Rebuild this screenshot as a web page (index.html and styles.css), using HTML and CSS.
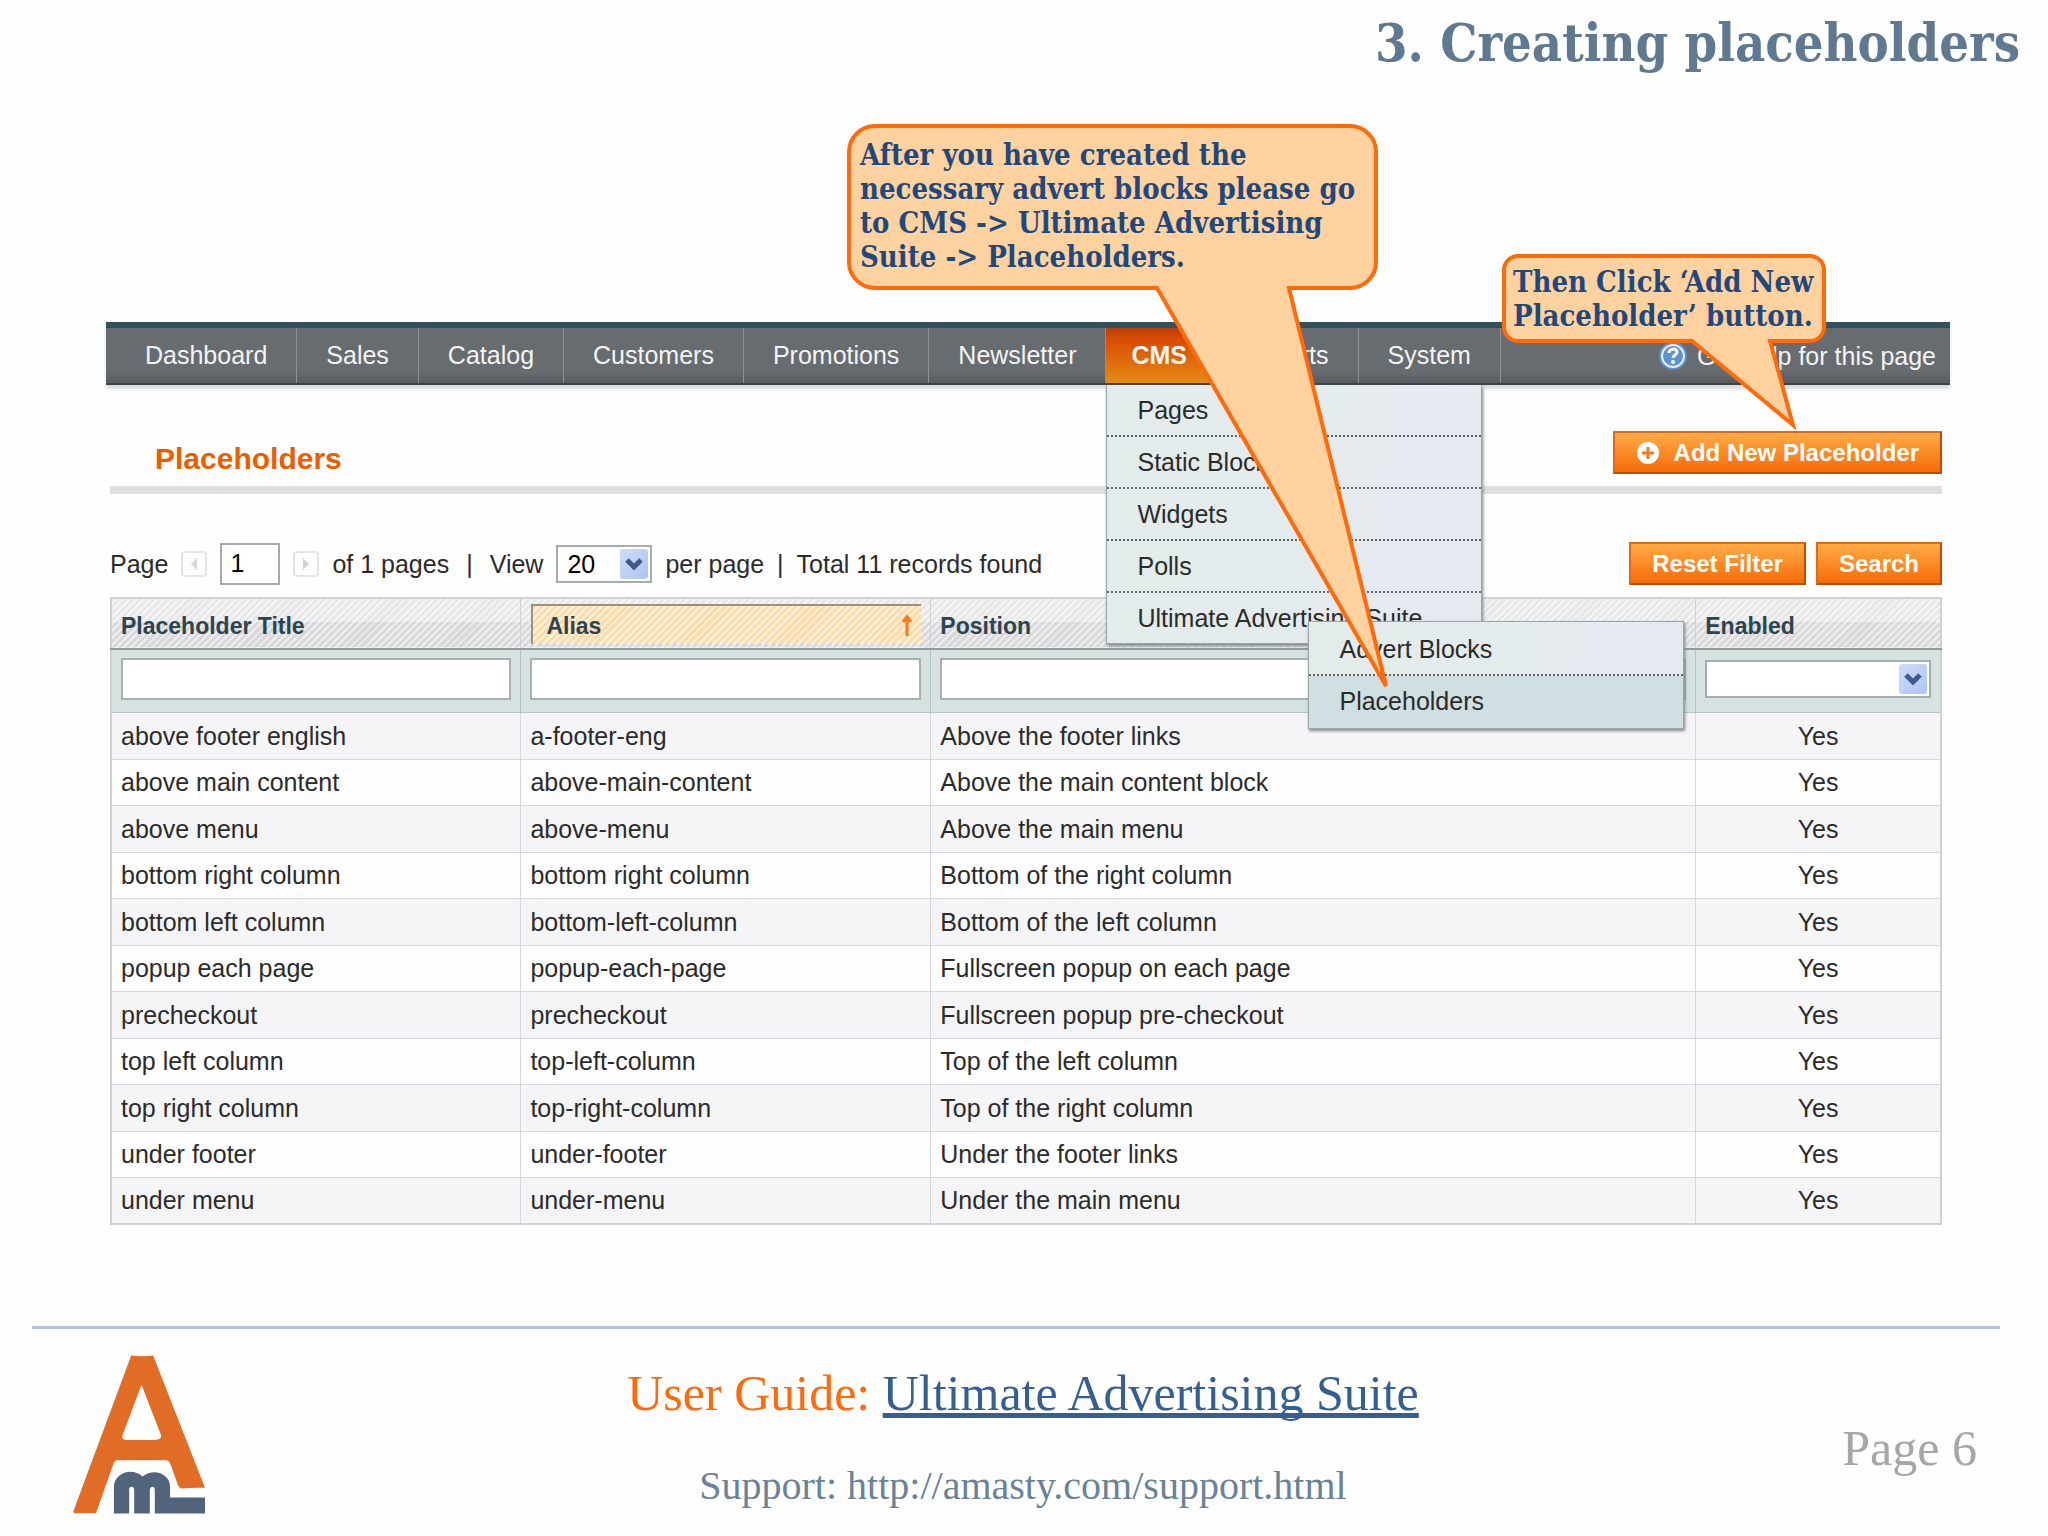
FILE: index.html
```html
<!DOCTYPE html>
<html lang="en">

<head>
    <meta charset="UTF-8">
    <meta name="viewport" content="width=device-width, initial-scale=1.0">
    <title>3. Creating placeholders</title>
    <link rel="stylesheet" href="styles.css">
</head>

<body>
    <h1 class="slide-title">3. Creating placeholders</h1>

    <main class="admin">
        <nav class="nav">
            <ul class="nav-list">
                <li><a href="#">Dashboard</a></li>
                <li><a href="#">Sales</a></li>
                <li><a href="#">Catalog</a></li>
                <li><a href="#">Customers</a></li>
                <li><a href="#">Promotions</a></li>
                <li><a href="#">Newsletter</a></li>
                <li class="active">
                    <a href="#">CMS</a>
                    <ul class="menu">
                        <li><a href="#">Pages</a></li>
                        <li><a href="#">Static Blocks</a></li>
                        <li><a href="#">Widgets</a></li>
                        <li><a href="#">Polls</a></li>
                        <li><a href="#">Ultimate Advertising Suite</a>
                            <ul class="menu submenu">
                                <li><a href="#">Advert Blocks</a></li>
                                <li class="over"><a href="#">Placeholders</a></li>
                            </ul>
                        </li>
                    </ul>
                </li>
                <li><a href="#">Reports</a></li>
                <li><a href="#">System</a></li>
            </ul>
            <a class="help" href="#">
                <svg width="28" height="28" viewBox="0 0 28 28">
                    <circle cx="14" cy="14" r="14" fill="#5b8fd0" />
                    <circle cx="14" cy="14" r="11" fill="#5f92d2" stroke="#e6effa" stroke-width="2" />
                    <path d="M10 11c0-5 8-5 8-1 0 3-4 3-4 6" fill="none" stroke="#fff" stroke-width="3" />
                    <circle cx="14" cy="20" r="2" fill="#fff" />
                </svg>
                Get help for this page
            </a>
        </nav>

        <div class="content">
            <div class="content-header">
                <h2>Placeholders</h2>
                <button class="btn" type="button">
                    <svg width="24" height="24" viewBox="0 0 24 24">
                        <circle cx="12" cy="12" r="11" fill="#fff" />
                        <path d="M12 6v12M6 12h12" stroke="#f47a20" stroke-width="3" />
                    </svg>
                    Add New Placeholder
                </button>
            </div>

            <div class="pager">
                <label for="page">Page</label>
                <button class="arrow" type="button" aria-label="Previous page">
                    <svg width="8" height="12" viewBox="0 0 8 12"><path d="M7 0v12L1 6z" fill="#d3d3d8" /></svg>
                </button>
                <input class="page-input" type="text" id="page" value="1">
                <button class="arrow" type="button" aria-label="Next page">
                    <svg width="8" height="12" viewBox="0 0 8 12"><path d="M1 0v12l6-6z" fill="#d3d3d8" /></svg>
                </button>
                <span>of 1 pages</span>
                <span class="sep">|</span>
                <label for="limit">View</label>
                <span class="select limit">
                    <select id="limit">
                        <option>20</option>
                        <option>30</option>
                        <option>50</option>
                    </select>
                    <svg viewBox="0 0 28 30"><path d="M7 11l7 7 7-7" fill="none" stroke="#42598c" stroke-width="5" /></svg>
                </span>
                <span>per page</span>
                <span>|</span>
                <span>Total 11 records found</span>
                <div class="actions">
                    <button class="btn" type="button">Reset Filter</button>
                    <button class="btn" type="button">Search</button>
                </div>
            </div>

            <table class="grid">
                <colgroup>
                    <col class="col-title">
                    <col class="col-alias">
                    <col class="col-position">
                    <col class="col-enabled">
                </colgroup>
                <thead>
                    <tr class="headings">
                        <th>Placeholder Title</th>
                        <th class="sorted">
                            <div class="sort">Alias
                                <svg width="12" height="24" viewBox="0 0 12 24"><path d="M6 22V4M2 8l4-5 4 5" fill="none" stroke="#f47a20" stroke-width="3" /></svg>
                            </div>
                        </th>
                        <th>Position</th>
                        <th>Enabled</th>
                    </tr>
                    <tr class="filter">
                        <td><input type="text" aria-label="Filter by title"></td>
                        <td><input type="text" aria-label="Filter by alias"></td>
                        <td><input type="text" aria-label="Filter by position"></td>
                        <td>
                            <span class="select">
                                <select aria-label="Filter by enabled">
                                    <option></option>
                                    <option>Yes</option>
                                    <option>No</option>
                                </select>
                                <svg viewBox="0 0 28 30"><path d="M7 11l7 7 7-7" fill="none" stroke="#42598c" stroke-width="5" /></svg>
                            </span>
                        </td>
                    </tr>
                </thead>
                <tbody>
                    <tr><td>above footer english</td><td>a-footer-eng</td><td>Above the footer links</td><td>Yes</td></tr>
                    <tr><td>above main content</td><td>above-main-content</td><td>Above the main content block</td><td>Yes</td></tr>
                    <tr><td>above menu</td><td>above-menu</td><td>Above the main menu</td><td>Yes</td></tr>
                    <tr><td>bottom right column</td><td>bottom right column</td><td>Bottom of the right column</td><td>Yes</td></tr>
                    <tr><td>bottom left column</td><td>bottom-left-column</td><td>Bottom of the left column</td><td>Yes</td></tr>
                    <tr><td>popup each page</td><td>popup-each-page</td><td>Fullscreen popup on each page</td><td>Yes</td></tr>
                    <tr><td>precheckout</td><td>precheckout</td><td>Fullscreen popup pre-checkout</td><td>Yes</td></tr>
                    <tr><td>top left column</td><td>top-left-column</td><td>Top of the left column</td><td>Yes</td></tr>
                    <tr><td>top right column</td><td>top-right-column</td><td>Top of the right column</td><td>Yes</td></tr>
                    <tr><td>under footer</td><td>under-footer</td><td>Under the footer links</td><td>Yes</td></tr>
                    <tr><td>under menu</td><td>under-menu</td><td>Under the main menu</td><td>Yes</td></tr>
                </tbody>
            </table>
        </div>

        <div class="callout callout-menu">
            After you have created the<br>
            necessary advert blocks please go<br>
            to CMS -&gt; Ultimate Advertising<br>
            Suite -&gt; Placeholders.
            <svg class="tail" width="240" height="410" viewBox="0 0 240 410">
                <path d="M2 0v2l229 398L134 2V0z" fill="#ffd2a0" />
                <path d="M0 2h2l229 398L134 2h2" fill="none" stroke="#ff6a0a" stroke-width="4" />
            </svg>
        </div>

        <div class="callout callout-button">
            Then Click ‘Add New<br>
            Placeholder’ button.
            <svg class="tail" width="110" height="96" viewBox="0 0 110 96">
                <path d="M2 0v2l101 84L80 2V0z" fill="#ffd2a0" />
                <path d="M0 2h2l101 84L80 2h2" fill="none" stroke="#ff6a0a" stroke-width="4" />
            </svg>
        </div>
    </main>

    <footer class="footer">
        <svg class="logo" width="132" height="159" viewBox="0 0 397 477">
            <path fill="#e06c26" fill-rule="evenodd" d="M175 1q34 5 66 0L397 399q-36-2-72 2-7-3-10-12l-22-62q-3-9-12-11H130q-5 2-8 10L69 475H5q-5-2-3-8zM206 89l-58 155q-2 10 12 11h90q18-3 15-14z" />
            <path fill="#52647c" d="M123 476v-78c0-44 55-62 86-33 31-27 83-11 83 31v32h105v48H246v-68q0-12-7-12t-8 12v68h-47v-68q0-12-8-12t-7 12v68z" />
        </svg>
        <div class="guide">
            <p class="guide-title">User Guide: <a href="#">Ultimate Advertising Suite</a></p>
            <p class="support">Support: http://amasty.com/support.html</p>
        </div>
        <p class="page-number">Page 6</p>
    </footer>
</body>

</html>
```
FILE: styles.css
```css
* {
    box-sizing: border-box;
}

body {
    margin: 0;
    min-height: 100vh;
    display: flex;
    flex-direction: column;
    background: #fefefe;
    color: #2b2b2b;
    font-family: Georgia, "Liberation Serif", serif;
}

h1, h2, p, ul {
    margin: 0;
    padding: 0;
}

ul {
    list-style: none;
}

a {
    color: inherit;
    text-decoration: none;
}

svg {
    flex: none;
}

.slide-title {
    padding: 11px 28px 0;
    color: #5f7a90;
    font-family: Georgia, "DejaVu Serif Condensed", serif;
    font-size: 52px;
    line-height: 64px;
    text-align: right;
}

.admin {
    position: relative;
    margin: 247px 98px 0 106px;
    font-family: "Liberation Sans", Arial, sans-serif;
    font-size: 25px;
    line-height: 30px;
}

button, input, select {
    font: inherit;
    color: #000;
}

/* top navigation */
.nav {
    display: flex;
    justify-content: space-between;
    height: 63px;
    border-top: 6px solid #34505c;
    border-bottom: 2px solid #3b4547;
    background: linear-gradient(#676c70 80%, #555b5f);
    box-shadow: 0 4px 3px #dcdcdf;
    color: #f4f4f4;
}

.nav-list {
    display: flex;
}

.nav-list > li {
    position: relative;
    border-right: 1px solid #8d9195;
}

.nav-list > li > a {
    display: block;
    padding: 0 29px;
    line-height: 55px;
}

.nav-list > li:first-child > a {
    padding-left: 39px;
}

.nav-list > li.active {
    border-right: 0;
    background: linear-gradient(#b83f08, #d84c00 20%, #e58a16);
    font-weight: bold;
}

.nav-list > li.active > a {
    padding: 0 25px;
}

.help {
    display: flex;
    align-items: center;
    gap: 10px;
    padding-right: 14px;
}

.menu {
    position: absolute;
    top: 57px;
    left: 0;
    z-index: 2;
    width: 376px;
    border: 1px solid #9aa5a8;
    border-top: 0;
    background: linear-gradient(100deg, #e3ecea, #e5eaf1);
    box-shadow: 1px 2px 3px #7d8587;
    color: #2b2b2b;
    font-weight: normal;
}

.menu li {
    position: relative;
    border-bottom: 2px dotted #5d6668;
}

.menu li:last-child {
    border-bottom: 0;
}

.menu a {
    display: block;
    padding: 10px 30px;
}

.submenu {
    top: 28px;
    left: 201px;
    padding-top: 2px;
    border-top: 1px solid #9aa5a8;
}

.submenu .over {
    padding-bottom: 2px;
    background: #d0dfe1;
}

/* page content */
.content {
    margin: 0 8px 0 4px;
}

.content-header {
    display: flex;
    align-items: center;
    justify-content: space-between;
    height: 109px;
    padding: 0 0 1px 45px;
    border-bottom: 8px solid #dfdfe0;
}

.content-header h2 {
    padding-top: 48px;
    color: #eb5e00;
    font-size: 30px;
    line-height: 34px;
}

.content-header .btn {
    align-self: flex-end;
    gap: 14px;
    margin-bottom: 11px;
}

.btn {
    display: flex;
    align-items: center;
    justify-content: center;
    height: 43px;
    padding: 0 21px;
    border: 2px solid;
    border-color: #e06a10 #b8500a #b8500a #e06a10;
    background: linear-gradient(#ffac47, #f76b08);
    color: #fff;
    font-size: 24px;
    font-weight: bold;
    white-space: nowrap;
    cursor: pointer;
}

.pager {
    display: flex;
    align-items: center;
    gap: 13px;
    padding: 48px 0 12px;
}

.arrow {
    display: flex;
    align-items: center;
    justify-content: center;
    width: 26px;
    height: 26px;
    padding: 0;
    border: 2px solid #e3e3e8;
    border-radius: 4px;
    background: #fcfcfc;
}

.page-input {
    width: 60px;
    height: 42px;
    padding: 0 8px;
    border: 2px solid #a9a9a9;
}

.sep {
    margin: 0 4px;
}

.actions {
    display: flex;
    gap: 10px;
    margin-left: auto;
}

.select {
    position: relative;
    display: block;
}

.select select {
    display: block;
    appearance: none;
    width: 100%;
    height: 38px;
    padding: 0 9px;
    border: 2px solid #a5acb2;
    border-radius: 0;
    background: #fff;
}

.select svg {
    position: absolute;
    top: 4px;
    right: 4px;
    width: 28px;
    height: 30px;
    border-radius: 3px;
    background: linear-gradient(135deg, #cfdcfb, #aec2f5);
    pointer-events: none;
}

.limit {
    width: 96px;
}

/* grid */
.grid {
    width: 100%;
    border: 2px solid #cfd2d4;
    border-collapse: collapse;
    table-layout: fixed;
}

.col-title,
.col-alias {
    width: 22.4%;
}

.col-enabled {
    width: 13.4%;
}

.headings {
    height: 51px;
    border-bottom: 2px solid #8f9c9e;
    background:
        repeating-linear-gradient(135deg, transparent 0 3px, #ffffff90 3px 5px),
        linear-gradient(#e8e8ea 50%, #d9d9db 50%);
}

.headings th {
    padding: 4px 9px 0;
    border-right: 1px solid #cfd2d4;
    color: #2d444f;
    font-size: 23px;
    text-align: left;
}

.headings .sorted {
    padding: 4px 9px;
}

.sort {
    display: flex;
    align-items: center;
    justify-content: space-between;
    height: 40px;
    margin-left: 1px;
    padding: 2px 8px 0 13px;
    border-top: 2px solid #9c9186;
    border-left: 2px solid #9c9186;
    background: repeating-linear-gradient(135deg, #fbdcae 0 3px, #fff0da 3px 5px);
}

.grid td {
    padding: 0 9px;
    border-right: 1px solid #d5d7da;
    border-bottom: 1px solid #d5d7da;
    white-space: nowrap;
}

.grid .filter {
    height: 63px;
    background: #d5e2e0;
}

.grid .filter td {
    padding-bottom: 3px;
    border-color: #b3c3c8;
}

.filter input {
    display: block;
    width: 100%;
    height: 42px;
    border: 2px solid #a9b0b3;
    background: #fff;
}

.grid tbody tr {
    height: 46px;
    background: #fefefe;
}

.grid tbody tr:nth-child(odd) {
    height: 47px;
    background: #f5f5f7;
}

.grid tbody td:last-child {
    text-align: center;
}

/* speech bubbles over the page */
.callout {
    position: absolute;
    z-index: 5;
    border: 4px solid #ff6a0a;
    background: #ffd2a0;
    color: #1f497d;
    font-family: Georgia, "DejaVu Serif Condensed", serif;
    font-weight: bold;
    font-size: 29px;
    line-height: 34px;
    white-space: nowrap;
}

.callout-menu {
    top: -198px;
    left: 741px;
    width: 531px;
    height: 166px;
    padding: 10px 9px;
    border-radius: 28px;
}

.callout-button {
    top: -68px;
    right: 124px;
    width: 324px;
    height: 89px;
    padding: 7px;
    border-radius: 16px;
}

.tail {
    position: absolute;
    top: 100%;
}

.callout-menu .tail {
    left: 304px;
}

.callout-button .tail {
    left: 184px;
}

/* footer */
.footer {
    display: grid;
    grid-template-columns: 1fr auto 1fr;
    margin: auto 48px 0 32px;
    padding: 26px 0 22px 14px;
    border-top: 3px solid #b5c3df;
}

.logo {
    margin-left: 27px;
}

.guide {
    padding-top: 10px;
    text-align: center;
}

.guide-title {
    color: #ff6a0a;
    font-size: 50px;
    line-height: 56px;
}

.guide-title a {
    color: #365f91;
    text-decoration: underline;
    text-decoration-skip-ink: none;
}

.support {
    margin-top: 45px;
    color: #6a8296;
    font-size: 40px;
    line-height: 40px;
}

.page-number {
    align-self: end;
    padding: 0 23px 38px 0;
    color: #a6a6a6;
    font-size: 50px;
    line-height: 56px;
    text-align: right;
}
```
